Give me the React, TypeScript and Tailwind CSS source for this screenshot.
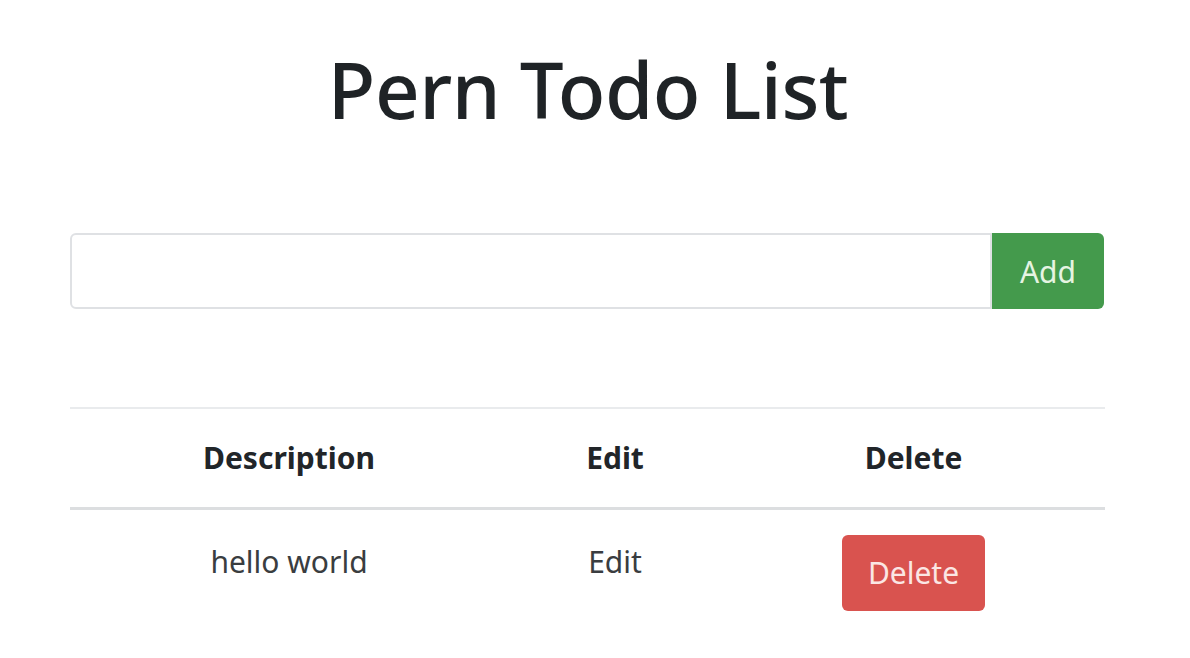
export default function App() {
  return (
    <div className="w-[1190px] h-[658px] bg-white overflow-hidden" style={{ fontFamily: '"Noto Sans", "Open Sans", sans-serif' }}>
      <h1 className="text-center text-[78px] leading-none font-medium text-[#1f2326] pt-[50px] pr-[14px] tracking-[-0.5px]">Pern Todo List</h1>
      <div className="flex mx-[70px] w-[1034px] mt-[105px]">
        <input className="flex-1 h-[76px] border-2 border-[#dfe1e4] rounded-l-[6px] outline-none" />
        <button className="w-[112px] h-[76px] bg-[#449a4c] text-[#e6f4e2] text-[30px] rounded-r-[6px]">Add</button>
      </div>
      <table className="ml-[70px] w-[1035px] mt-[98px] text-[#212529] text-[30px]">
        <thead>
          <tr className="border-t-2 border-[#e9ebed] border-b-[3px] border-b-[#dcdee0]">
            <th className="w-[438px] h-[100px] font-bold text-center">Description</th>
            <th className="w-[214px] font-bold text-center">Edit</th>
            <th className="font-bold text-center">Delete</th>
          </tr>
        </thead>
        <tbody>
          <tr>
            <td className="text-center align-top pt-[29px] text-[#3a3d40]">hello world</td>
            <td className="text-center align-top pt-[29px] text-[#3a3d40]">Edit</td>
            <td className="text-center align-top pt-[25px]">
              <button className="w-[143px] h-[76px] bg-[#d9534f] text-[#fbe6e4] text-[30px] rounded-[6px]">Delete</button>
            </td>
          </tr>
        </tbody>
      </table>
    </div>
  );
}
